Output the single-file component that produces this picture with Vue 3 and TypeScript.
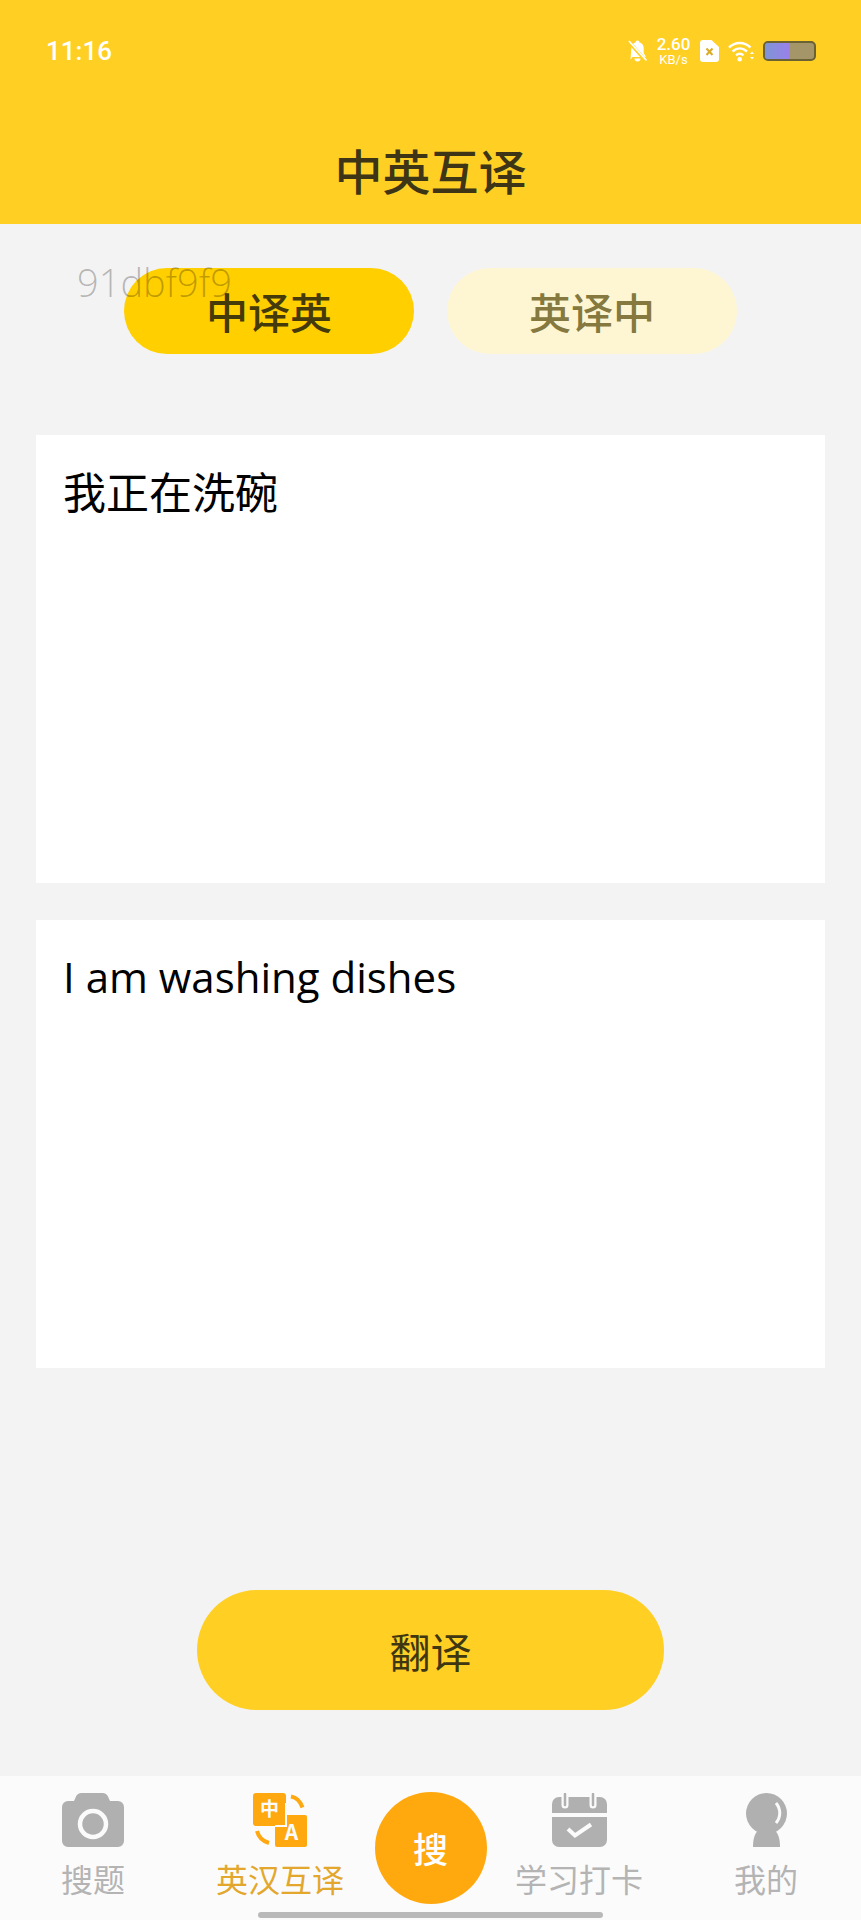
<script setup lang="ts">
import { ref } from 'vue';

const mode = ref<'zh' | 'en'>('zh');
const source = ref('我正在洗碗');
const result = ref('I am washing dishes');
</script>

<template>
  <div class="page">
    <header class="header">
      <div class="status">
        <span class="time">11:16</span>
        <div class="status-icons">
          <svg class="bell" viewBox="0 0 19 22">
            <path d="M9.500 0.500c1 0 1.700.6 2 1.700 2.800.8 4.200 3.200 4.200 6.300v4.500l2.300 4H4.500L2.500 19.500 3.300 8.500c.2-3.100 1.600-5.500 4.200-6.300.3-1.100 1-1.700 2-1.700z" fill="#fff" />
            <path d="M6.500 18.500h6a3 3 0 0 1-6 0z" fill="#fff" />
            <path d="M0.500 1.500 18 21" stroke="#ffcf24" stroke-width="3.500" />
            <path d="M1 1 18.500 20.500" stroke="#fff" stroke-width="1.800" />
          </svg>
          <div class="speed">
            <span class="speed-num">2.60</span>
            <span class="speed-unit">KB/s</span>
          </div>
          <svg class="sim" viewBox="0 0 19 22">
            <path d="M3 0h8.500L19 7v12a3 3 0 0 1-3 3H3a3 3 0 0 1-3-3V3a3 3 0 0 1 3-3z" fill="#fff" />
            <path d="M6.500 8.500l6 6.500M12.500 8.500l-6 6.500" stroke="#d9ac28" stroke-width="2" />
          </svg>
          <svg class="wifi" viewBox="0 0 27 22">
            <path d="M1 7.500C7.500 1.500 16 1.500 22.500 7.500M4.500 11.500C9 7.500 14.500 7.500 19 11.500M8 15.300c2.500-2 5-2 7.500 0" fill="none" stroke="#fff" stroke-width="2.400" />
            <circle cx="11.700" cy="19.200" r="2.300" fill="#fff" />
            <path d="M24 11.500l2 2.500h-4zM24 19.500l2-2.500h-4z" fill="#fff" />
          </svg>
          <div class="battery"><div class="battery-fill"></div></div>
        </div>
      </div>
      <h1 class="title">中英互译</h1>
    </header>

    <main class="main">
      <span class="watermark">91dbf9f9</span>

      <div class="switch">
        <button class="switch-btn" :class="{ on: mode === 'zh' }" @click="mode = 'zh'">中译英</button>
        <button class="switch-btn" :class="{ on: mode === 'en' }" @click="mode = 'en'">英译中</button>
      </div>

      <div class="box box-zh">{{ source }}</div>
      <div class="box box-en">{{ result }}</div>

      <button class="translate">翻译</button>
    </main>

    <nav class="tabbar">
      <div class="tab">
        <svg class="tab-icon" width="62" height="54" viewBox="0 0 62 54">
          <path d="M6 8h6l2-4.500A6 6 0 0 1 19.500 0h21a6 6 0 0 1 5.500 3.500L48 8h8a6 6 0 0 1 6 6v34a6 6 0 0 1-6 6H6a6 6 0 0 1-6-6V14a6 6 0 0 1 6-6z" fill="#b0b0b0" />
          <circle cx="31" cy="31" r="13" fill="none" stroke="#fbfbfb" stroke-width="4.500" />
        </svg>
        <span>搜题</span>
      </div>
      <div class="tab active">
        <svg class="tab-icon" width="54" height="54" viewBox="0 0 54 54">
          <rect x="22" y="22" width="32" height="32" rx="2" fill="#ffa80f" />
          <rect x="0" y="0" width="33" height="33" rx="3" fill="#ffa80f" />
          <path d="M33 10v23H22" fill="none" stroke="#fbfbfb" stroke-width="2" />
          <text x="16.500" y="23" class="ico-text" font-size="19">中</text>
          <text x="38.500" y="47" class="ico-text" font-size="21">A</text>
          <path d="M38 3.500c5.500 1 9.500 5 11.500 11M4 38c1.500 6 5 10 12 12" fill="none" stroke="#ffa80f" stroke-width="4" />
        </svg>
        <span>英汉互译</span>
      </div>
      <div class="tab-center">
        <div class="search-btn">搜</div>
      </div>
      <div class="tab">
        <svg class="tab-icon" width="55" height="54" viewBox="0 0 55 54">
          <path d="M7 4h41a7 7 0 0 1 7 7v9H0v-9a7 7 0 0 1 7-7zM0 24h55v23a7 7 0 0 1-7 7H7a7 7 0 0 1-7-7z" fill="#b0b0b0" />
          <path d="M13 0v12M41 0v12" stroke="#fbfbfb" stroke-width="7" stroke-linecap="round" />
          <path d="M13 1v11M41 1v11" stroke="#b0b0b0" stroke-width="2.500" stroke-linecap="round" />
          <path d="M16 36l7 6.500 16-11" fill="none" stroke="#fbfbfb" stroke-width="4" />
        </svg>
        <span>学习打卡</span>
      </div>
      <div class="tab">
        <svg class="tab-icon" width="41" height="54" viewBox="0 0 41 54">
          <circle cx="20.500" cy="20.500" r="20.500" fill="#b0b0b0" />
          <path d="M7 54c0-9 2-15 7-18h13c5 3 7 9 7 18z" fill="#b0b0b0" />
          <path d="M30 10c5 6 5 14 0 20" fill="none" stroke="#fbfbfb" stroke-width="3" />
        </svg>
        <span>我的</span>
      </div>
      <div class="home-bar"></div>
    </nav>
  </div>
</template>

<style scoped>
.page {
  position: relative;
  display: flex;
  flex-direction: column;
  width: 861px;
  height: 1920px;
  overflow: hidden;
  background: #f3f3f3;
  font-family: "Noto Sans CJK SC", "Noto Sans", sans-serif;
}

.header {
  height: 224px;
  background: #ffcf24;
  padding-top: 34px;
  box-sizing: border-box;
}

.status {
  display: flex;
  align-items: center;
  justify-content: space-between;
  height: 34px;
  padding: 0 45px 0 46px;
}

.time {
  font-family: Roboto, sans-serif;
  font-size: 26px;
  font-weight: 500;
  color: #fff;
}

.status-icons {
  display: flex;
  align-items: center;
}

.bell {
  width: 19px;
  height: 22px;
  margin-right: 9px;
}

.speed {
  display: flex;
  flex-direction: column;
  align-items: center;
  width: 35px;
  margin-right: 9px;
  color: #fff;
  font-family: Roboto, sans-serif;
}

.speed-num {
  font-size: 17px;
  line-height: 17px;
  font-weight: 500;
}

.speed-unit {
  font-size: 13px;
  line-height: 13px;
}

.sim {
  width: 19px;
  height: 22px;
  margin-right: 9px;
}

.wifi {
  width: 27px;
  height: 22px;
  margin-right: 8px;
}

.battery {
  width: 53px;
  height: 20px;
  box-sizing: border-box;
  border: 2px solid #6a6134;
  border-radius: 5px;
  background: #a49668;
  overflow: hidden;
}

.battery-fill {
  width: 50%;
  height: 100%;
  background: linear-gradient(90deg, #7f95d6, #9a80ea);
}

.title {
  margin: 63px 0 0;
  text-align: center;
  font-size: 48px;
  line-height: 76px;
  font-weight: 500;
  color: #3d3516;
}

.main {
  position: relative;
  flex: 1;
  display: flex;
  flex-direction: column;
  align-items: center;
  min-height: 0;
}

.watermark {
  position: absolute;
  left: 77px;
  top: 34px;
  z-index: 2;
  font-family: "Open Sans", sans-serif;
  font-size: 38px;
  font-weight: 300;
  line-height: 48px;
  color: rgba(0, 0, 0, 0.26);
  pointer-events: none;
}

.switch {
  display: flex;
  gap: 33px;
  margin-top: 44px;
}

.switch-btn {
  width: 290px;
  height: 86px;
  padding: 0 0 2px;
  border: 0;
  border-radius: 43px;
  background: #fef6d2;
  color: #85793f;
  font-family: inherit;
  font-size: 42px;
  font-weight: 500;
}

.switch-btn.on {
  background: #ffcf00;
  color: #443a0a;
}

.box {
  width: 789px;
  height: 448px;
  box-sizing: border-box;
  padding: 24px 27px;
  background: #fff;
  color: #000;
}

.box-zh {
  margin-top: 81px;
  font-size: 43px;
  line-height: 62px;
}

.box-en {
  margin-top: 37px;
  padding-top: 26px;
  font-family: "Open Sans", sans-serif;
  font-size: 42px;
  line-height: 62px;
}

.translate {
  width: 467px;
  height: 120px;
  margin-top: 222px;
  padding: 0;
  border: 0;
  border-radius: 60px;
  background: #ffcf24;
  color: #3f3712;
  font-family: inherit;
  font-size: 41px;
}

.tabbar {
  position: relative;
  display: grid;
  grid-template-columns: 186px 188px 113px 184px 190px;
  height: 144px;
  background: #fbfbfb;
}

.tab {
  display: flex;
  flex-direction: column;
  align-items: center;
  padding-top: 17px;
  color: #b4b4b4;
  font-size: 32px;
  line-height: 46px;
}

.tab.active {
  color: #e2a72c;
}

.tab-icon {
  display: block;
  height: 54px;
  margin-bottom: 8px;
}

.ico-text {
  fill: #fbfbfb;
  font-weight: 700;
  text-anchor: middle;
}

.tab-center {
  display: flex;
  justify-content: center;
}

.search-btn {
  flex: none;
  width: 112px;
  height: 112px;
  margin-top: 16px;
  border-radius: 50%;
  background: #ffa90f;
  color: #fff;
  font-size: 35px;
  font-weight: 500;
  line-height: 112px;
  text-align: center;
}

.home-bar {
  position: absolute;
  left: 258px;
  bottom: 2px;
  width: 345px;
  height: 6px;
  border-radius: 3px;
  background: #b9b9b9;
}
</style>
